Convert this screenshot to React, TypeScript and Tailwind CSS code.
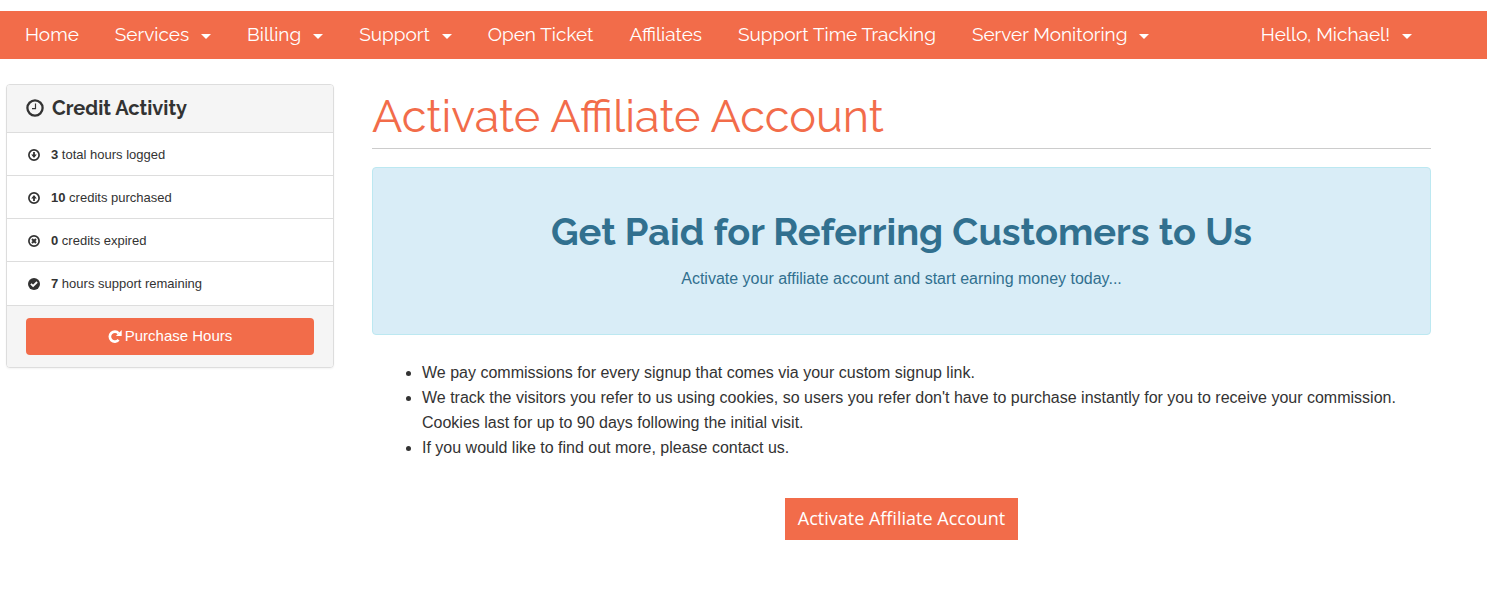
import type { ReactNode } from "react";

const navItems = [
  { label: "Home", menu: false },
  { label: "Services", menu: true },
  { label: "Billing", menu: true },
  { label: "Support", menu: true },
  { label: "Open Ticket", menu: false },
  { label: "Affiliates", menu: false },
  { label: "Support Time Tracking", menu: false },
  { label: "Server Monitoring", menu: true },
];

const Caret = () => (
  <svg className="mt-1 h-[5px] w-[10px]" viewBox="0 0 10 5" fill="currentColor" aria-hidden="true">
    <path d="M0 0h10L5 5z" />
  </svg>
);

const NavLink = ({ label, menu }: { label: string; menu: boolean }) => (
  <a href="#" className="flex items-center gap-3 whitespace-nowrap hover:underline">
    {label}
    {menu && <Caret />}
  </a>
);

const CircleIcon = ({ children }: { children: ReactNode }) => (
  <svg className="h-3 w-3" viewBox="0 0 12 12" fill="currentColor" aria-hidden="true">
    <circle cx="6" cy="6" r="5.1" fill="none" stroke="currentColor" strokeWidth="1.7" />
    {children}
  </svg>
);

const ClockIcon = () => (
  <svg className="h-[18px] w-[18px]" viewBox="0 0 18 18" fill="none" stroke="currentColor" aria-hidden="true">
    <circle cx="9" cy="9" r="7.6" strokeWidth="2.3" />
    <path d="M9.5 4.6v5H6" strokeWidth="1.2" />
  </svg>
);

const RepeatIcon = () => (
  <svg className="h-[13px] w-[14px]" viewBox="0 0 14 13" fill="none" aria-hidden="true">
    <path d="M10.6 3.3A5 5 0 1 0 10.6 9.9" stroke="currentColor" strokeWidth="2.7" />
    <path d="M13.7 0v6H7.9z" fill="currentColor" />
  </svg>
);

const CheckIcon = () => (
  <svg className="h-3 w-3" viewBox="0 0 12 12" aria-hidden="true">
    <circle cx="6" cy="6" r="6" fill="currentColor" />
    <path d="M2.9 5.8l2.2 2.2 4-4" fill="none" stroke="#fff" strokeWidth="1.8" />
  </svg>
);

const activity = [
  {
    icon: <CircleIcon><path d="M5.1 3h1.8v2.6h1.9L6 9 3.2 5.6h1.9z" /></CircleIcon>,
    amount: 3,
    text: "total hours logged",
  },
  {
    icon: <CircleIcon><path d="M5.1 9h1.8V6.4h1.9L6 3 3.2 6.4h1.9z" /></CircleIcon>,
    amount: 10,
    text: "credits purchased",
  },
  {
    icon: <CircleIcon><path d="M4 4l4 4M8 4L4 8" stroke="currentColor" strokeWidth="2" /></CircleIcon>,
    amount: 0,
    text: "credits expired",
  },
  {
    icon: <CheckIcon />,
    amount: 7,
    text: "hours support remaining",
  },
];

const CreditActivity = () => (
  <aside className="w-[328px] shrink-0 overflow-hidden rounded border border-[#ddd] bg-white shadow-xs">
    <h3 className="flex h-[47px] items-center gap-2 bg-[#f5f5f5] px-[19px] pb-[2px] font-[Raleway,Lato,sans-serif] text-xl font-bold">
      <ClockIcon />
      Credit Activity
    </h3>
    <ul className="pb-px text-[13px]">
      {activity.map((row) => (
        <li key={row.text} className="flex h-[43px] items-center gap-[11px] border-t border-[#ddd] px-[21px] pt-px">
          {row.icon}
          <span>
            <span className="font-bold">{row.amount}</span> {row.text}
          </span>
        </li>
      ))}
    </ul>
    <div className="border-t border-[#ddd] bg-[#f5f5f5] px-[19px] py-3">
      <button className="flex h-[37px] w-full items-center justify-center gap-[3px] rounded bg-[#f26c4a] text-[15px] text-white">
        <RepeatIcon />
        Purchase Hours
      </button>
    </div>
  </aside>
);

const App = () => {
  return (
    <div className="bg-white pt-[11px] font-['Liberation_Sans',Arial,sans-serif] text-[#333]">
      <nav className="flex h-12 items-center justify-between bg-[#f26c4a] pr-[75px] pb-[2px] pl-[25px] font-[Raleway,Lato,sans-serif] text-[19px] text-white">
        <div className="flex items-center gap-9">
          {navItems.map((item) => (
            <NavLink key={item.label} {...item} />
          ))}
        </div>
        <NavLink label="Hello, Michael!" menu />
      </nav>

      <div className="flex items-start gap-[38px] pt-[25px] pr-14 pl-[6px]">
        <CreditActivity />

        <main className="min-w-0 flex-1">
          <h1 className="border-b border-[#ccc] pt-[3px] pb-px font-[Raleway,Lato,sans-serif] text-[45px] leading-[60px] font-normal text-[#f26c4a]">
            Activate Affiliate Account
          </h1>

          <section className="mt-[18px] rounded border border-[#bce8f1] bg-[#d9edf7] px-4 pt-10 pb-10 text-center text-[#31708f]">
            <h2 className="font-[Raleway,Lato,sans-serif] text-[38px] leading-12 font-bold">
              Get Paid for Referring Customers to Us
            </h2>
            <p className="mt-[11px] mb-[3px] text-base">Activate your affiliate account and start earning money today...</p>
          </section>

          <ul className="mt-[25px] list-disc pl-[50px] text-base leading-[25px]">
            <li>We pay commissions for every signup that comes via your custom signup link.</li>
            <li>
              We track the visitors you refer to us using cookies, so users you refer don't have to purchase instantly
              for you to receive your commission. Cookies last for up to 90 days following the initial visit.
            </li>
            <li>If you would like to find out more, please contact us.</li>
          </ul>

          <div className="mt-[38px] text-center">
            <button className="h-[42px] bg-[#f26c4a] px-[13px] pb-[2px] font-['Open_Sans',sans-serif] text-lg text-white">
              Activate Affiliate Account
            </button>
          </div>
        </main>
      </div>
    </div>
  );
};

export default App;
